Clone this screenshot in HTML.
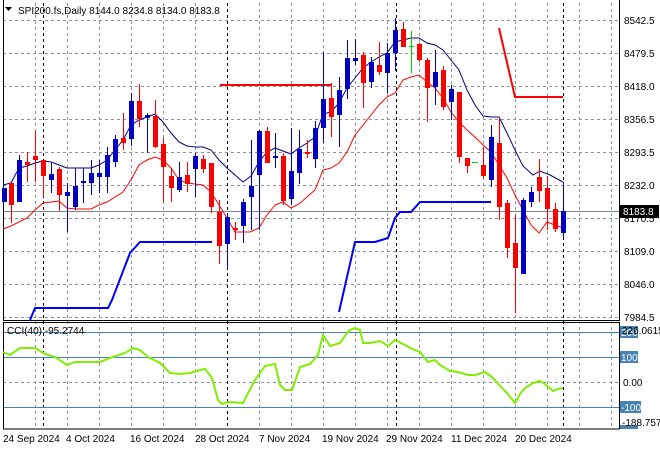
<!DOCTYPE html>
<html><head><meta charset="utf-8"><style>
html,body{margin:0;padding:0;background:#fff;}
svg{display:block;font-family:"Liberation Sans",sans-serif;font-size:10px;}
</style></head><body>
<svg width="660" height="450" viewBox="0 0 660 450" xmlns="http://www.w3.org/2000/svg">
<rect width="660" height="450" fill="#fff"/>
<!-- grid -->
<g stroke="#8a949c" stroke-width="1" stroke-dasharray="3,3">
<path d="M3 20.5H619M3 53.5H619M3 86.5H619M3 119.5H619M3 152.5H619M3 185.5H619M3 218.5H619M3 251.5H619M3 284.5H619M3 317.5H619"/>
<path d="M3 382.5H619"/>
<path d="M35.5 3V429M67.5 3V429M99.5 3V429M131.5 3V429M163.5 3V429M195.5 3V429M259.5 3V429M291.5 3V429M323.5 3V429M355.5 3V429M387.5 3V429M419.5 3V429M451.5 3V429M483.5 3V429M515.5 3V429M547.5 3V429M579.5 3V429M611.5 3V429"/>
</g>
<g stroke="#000" stroke-width="1" stroke-dasharray="3,3">
<path d="M43.5 3V429M227.5 3V429M396.5 3V429M563.5 3V429"/>
</g>
<line x1="3" y1="211.5" x2="619" y2="211.5" stroke="#7a848c"/>
<!-- CCI levels -->
<g stroke="#4682b4" stroke-width="1"><path d="M3 332.5H619M3 357.5H619M3 407.5H619"/></g>
<!-- frame -->
<g stroke="#000" fill="none" stroke-width="1">
<path d="M3.5 0V320.5H619.5V0"/>
<rect x="3.5" y="322.5" width="616" height="106.5"/>
</g>
<!-- resistance red -->
<path d="M220 85H332" stroke="#f00" stroke-width="2" fill="none"/>
<path d="M499 28L515 97H563" stroke="#f00" stroke-width="2" fill="none"/>
<!-- support blue -->
<path d="M30 320L35 308H108L112 300L130 253L140 242H212" stroke="#0000ff" stroke-width="2" fill="none"/>
<path d="M339 312L355 242H375L388 238L395 218L400 212H411L420 202H491" stroke="#0000ff" stroke-width="2" fill="none"/>
<!-- MAs -->
<polyline fill="none" stroke="#000080" stroke-width="1" points="3,185 11,183 19,168 27,166 35,163 43,161 51,162 59,165 67,168 75,168 83,168 91,168 99,165 107,160 115,150 123,140 131,125 139,120 147,117 155,114 163,122 171,133 179,142 187,146 195,147 203,147 211,150 219,160 227,168 235,175 243,182 251,176 259,162 267,152 275,148 283,151 291,154 299,148 307,143 315,137 323,114 331,112 339,103 347,88 355,78 363,68 371,62 379,57 387,53 395,42 403,40 411,38 419,38 427,43 435,45 443,50 451,60 459,70 467,90 475,105 483,116 491,117 499,117 507,133 515,150 523,166 533,175 540,171 550,175 563,182"/>
<polyline fill="none" stroke="#f00" stroke-width="1" points="3,229 11,226 27,218 35,210 43,203 51,202 59,201 67,208 75,209 91,209 99,205 107,202 123,192 131,180 139,165 147,160 155,157 163,160 171,168 179,180 187,183 203,185 211,192 219,205 227,218 235,232 250,232 259,228 267,215 275,205 283,202 291,208 299,204 307,197 315,190 323,170 331,168 339,163 347,152 355,135 363,125 371,115 379,105 387,97 395,93 403,80 411,77 419,75 427,82 435,88 443,98 451,112 459,122 467,130 475,137 483,145 491,152 499,165 507,178 515,195 523,210 531,225 539,233 547,222 555,225 563,228"/>
<!-- candles -->
<g id="c">
<g stroke="#0000c0" fill="#0000c0">
<path d="M3.5 180V205M19.5 155V202M51.5 163V193M67.5 183V232M75.5 168V210M83.5 168V203M91.5 160V195M99.5 160V193M107.5 147V193M115.5 135V167M131.5 93V146M147.5 113V153M179.5 162V192M195.5 153V197M227.5 214V269M243.5 199V243M251.5 140V230M259.5 130V230M275.5 133V168M291.5 128V205M299.5 130V184M315.5 121V168M323.5 52V143M339.5 77V147M347.5 40V99M355.5 39V65M371.5 57V88M387.5 43V93M395.5 18V71M435.5 50V105M451.5 85V120M491.5 125V187M523.5 198V274M531.5 187V207M563.5 182V238"/>
</g>
<g fill="#0000c0">
<rect x="2" y="188" width="5" height="14"/><rect x="17" y="160" width="5" height="42"/><rect x="49" y="174" width="5" height="6"/><rect x="65" y="192" width="5" height="4"/><rect x="73" y="186" width="5" height="21"/><rect x="81" y="181" width="5" height="2"/><rect x="89" y="173" width="5" height="10"/><rect x="97" y="173" width="5" height="4"/><rect x="105" y="155" width="5" height="22"/><rect x="113" y="139" width="5" height="23"/><rect x="129" y="101" width="5" height="38"/><rect x="145" y="115" width="5" height="3"/><rect x="177" y="177" width="5" height="13"/><rect x="193" y="156" width="5" height="13"/><rect x="225" y="217" width="5" height="27"/><rect x="241" y="202" width="5" height="24"/><rect x="249" y="186" width="5" height="11"/><rect x="257" y="131" width="5" height="44"/><rect x="273" y="156" width="5" height="2"/><rect x="289" y="171" width="5" height="28"/><rect x="297" y="149" width="5" height="24"/><rect x="313" y="128" width="5" height="31"/><rect x="321" y="99" width="5" height="29"/><rect x="337" y="90" width="5" height="25"/><rect x="345" y="58" width="5" height="31"/><rect x="353" y="58" width="5" height="3"/><rect x="369" y="62" width="5" height="20"/><rect x="385" y="53" width="5" height="20"/><rect x="393" y="30" width="5" height="23"/><rect x="433" y="72" width="5" height="15"/><rect x="449" y="89" width="5" height="13"/><rect x="489" y="137" width="5" height="43"/><rect x="521" y="200" width="5" height="74"/><rect x="529" y="192" width="5" height="10"/><rect x="561" y="211" width="5" height="22"/>
</g>
<g stroke="#f00">
<path d="M11.5 183V223M27.5 152V182M35.5 131V182M43.5 160V197M59.5 167V211M123.5 113V150M139.5 84V127M155.5 100V148M163.5 138V202M171.5 168V202M187.5 162V192M203.5 155V173M211.5 163V213M219.5 200V264M235.5 222V240M267.5 127V163M283.5 153V205M307.5 140V158M331.5 83V137M363.5 52V108M379.5 42V75M403.5 22V47M419.5 43V62M427.5 58V122M443.5 66V110M459.5 92V163M467.5 158V173M483.5 147V178M499.5 117V220M507.5 200V258M515.5 215V313M539.5 159V202M547.5 176V230M555.5 203V232"/>
</g>
<g fill="#f00">
<rect x="9" y="183" width="5" height="22"/><rect x="25" y="162" width="5" height="3"/><rect x="33" y="156" width="5" height="4"/><rect x="41" y="160" width="5" height="16"/><rect x="57" y="169" width="5" height="26"/><rect x="121" y="138" width="5" height="5"/><rect x="137" y="101" width="5" height="18"/><rect x="153" y="116" width="5" height="31"/><rect x="161" y="144" width="5" height="23"/><rect x="169" y="176" width="5" height="12"/><rect x="185" y="175" width="5" height="9"/><rect x="201" y="159" width="5" height="10"/><rect x="209" y="163" width="5" height="44"/><rect x="217" y="212" width="5" height="34"/><rect x="233" y="228" width="5" height="2"/><rect x="265" y="131" width="5" height="32"/><rect x="281" y="156" width="5" height="45"/><rect x="305" y="152" width="5" height="2"/><rect x="329" y="98" width="5" height="19"/><rect x="361" y="55" width="5" height="28"/><rect x="377" y="65" width="5" height="7"/><rect x="401" y="29" width="5" height="18"/><rect x="417" y="44" width="5" height="16"/><rect x="425" y="60" width="5" height="28"/><rect x="441" y="70" width="5" height="37"/><rect x="457" y="92" width="5" height="65"/><rect x="465" y="158" width="5" height="8"/><rect x="481" y="165" width="5" height="11"/><rect x="497" y="143" width="5" height="64"/><rect x="505" y="203" width="5" height="45"/><rect x="513" y="243" width="5" height="25"/><rect x="537" y="177" width="5" height="14"/><rect x="545" y="188" width="5" height="21"/><rect x="553" y="209" width="5" height="20"/>
</g>
<g stroke="#00d000"><path d="M411.5 31V73M409 46.5H414M472 162.5H478"/></g>
</g>
<!-- CCI -->
<polyline fill="none" stroke="#7fef00" stroke-width="2" points="3,352 10,355 20,348 35,348 45,354 55,357 67,365 75,362 100,362 110,358 125,353 133,348 140,350 148,357 160,363 170,373 180,374 190,373 200,370 205,369 212,378 218,400 222,404 228,402 243,403 255,380 265,366 275,364 280,385 285,390 292,390 300,367 310,364 318,355 323,335 330,346 340,343 347,333 350,330 355,328 360,330 363,343 370,343 380,341 388,346 395,340 405,345 412,349 420,352 428,362 435,360 440,365 450,371 458,372 468,375 475,375 485,372 492,377 500,386 507,393 515,403 520,394 525,388 533,383 540,381 545,384 553,391 558,389 563,388"/>
<!-- title -->
<path d="M5 7H12L8.5 11Z" fill="#000"/>
<text x="18" y="14" fill="#000">SPI200.fs,Daily  8144.0 8234.8 8134.0 8183.8</text>
<text x="7" y="334" fill="#000">CCI(40) -95.2744</text>
<!-- price axis -->
<g fill="#000">
<text x="624" y="24">8542.5</text><text x="624" y="57">8479.5</text><text x="624" y="90">8418.0</text><text x="624" y="123">8356.5</text><text x="624" y="156">8293.5</text><text x="624" y="189">8232.0</text><text x="624" y="222">8170.5</text><text x="624" y="255">8109.0</text><text x="624" y="288">8046.0</text><text x="624" y="321">7984.5</text>
</g>
<rect x="620" y="205" width="39" height="13" fill="#000"/>
<text x="623" y="215" fill="#fff">8183.8</text>
<g fill="#4682b4"><rect x="620" y="326" width="18" height="12"/><rect x="620" y="351" width="18" height="12"/><rect x="620" y="401" width="21" height="12"/><rect x="620" y="425" width="18" height="4"/></g>
<g fill="#fff"><text x="621" y="336">200</text><text x="621" y="361">100</text><text x="621" y="411">-100</text></g>
<g fill="#000"><text x="622" y="334">226.0615</text><text x="623" y="386">0.00</text><text x="622" y="426">-188.757</text></g>
<!-- dates -->
<g fill="#000">
<text x="3" y="442">24 Sep 2024</text><text x="66" y="442">4 Oct 2024</text><text x="130" y="442">16 Oct 2024</text><text x="195" y="442">28 Oct 2024</text><text x="259" y="442">7 Nov 2024</text><text x="322" y="442">19 Nov 2024</text><text x="386" y="442">29 Nov 2024</text><text x="451" y="442">11 Dec 2024</text><text x="515" y="442">20 Dec 2024</text>
</g>
</svg>
</body></html>
